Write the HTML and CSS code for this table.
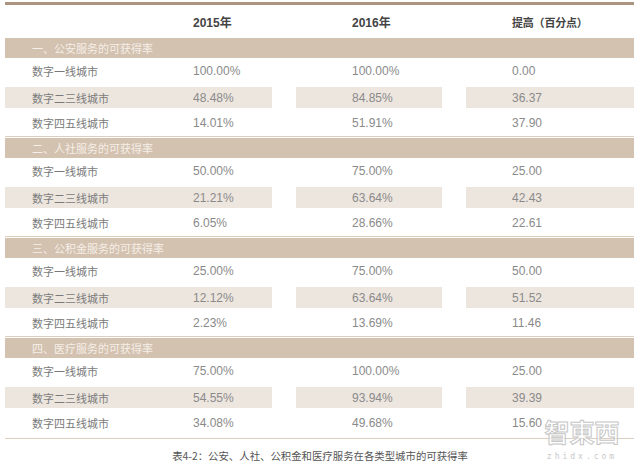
FILE: index.html
```html
<!DOCTYPE html>
<html lang="zh">
<head>
<meta charset="utf-8">
<link rel="stylesheet" href="styles.css">
</head>
<body>
<div class="page">
  <div class="table">
    <div class="head">
      <div class="ca"><span class="lbl"></span><span class="v1">2015年</span></div>
      <div class="cb">2016年</div>
      <div class="cc">提高（百分点）</div>
    </div>

    <div class="section">
      <div class="band">一、公安服务的可获得率</div>
      <div class="row"><div class="ca"><span class="lbl">数字一线城市</span><span class="v1">100.00%</span></div><div class="cb">100.00%</div><div class="cc">0.00</div></div>
      <div class="row alt"><div class="ca"><span class="lbl">数字二三线城市</span><span class="v1">48.48%</span></div><div class="cb">84.85%</div><div class="cc">36.37</div></div>
      <div class="row"><div class="ca"><span class="lbl">数字四五线城市</span><span class="v1">14.01%</span></div><div class="cb">51.91%</div><div class="cc">37.90</div></div>
    </div>

    <div class="section">
      <div class="band">二、人社服务的可获得率</div>
      <div class="row"><div class="ca"><span class="lbl">数字一线城市</span><span class="v1">50.00%</span></div><div class="cb">75.00%</div><div class="cc">25.00</div></div>
      <div class="row alt"><div class="ca"><span class="lbl">数字二三线城市</span><span class="v1">21.21%</span></div><div class="cb">63.64%</div><div class="cc">42.43</div></div>
      <div class="row"><div class="ca"><span class="lbl">数字四五线城市</span><span class="v1">6.05%</span></div><div class="cb">28.66%</div><div class="cc">22.61</div></div>
    </div>

    <div class="section">
      <div class="band">三、公积金服务的可获得率</div>
      <div class="row"><div class="ca"><span class="lbl">数字一线城市</span><span class="v1">25.00%</span></div><div class="cb">75.00%</div><div class="cc">50.00</div></div>
      <div class="row alt"><div class="ca"><span class="lbl">数字二三线城市</span><span class="v1">12.12%</span></div><div class="cb">63.64%</div><div class="cc">51.52</div></div>
      <div class="row"><div class="ca"><span class="lbl">数字四五线城市</span><span class="v1">2.23%</span></div><div class="cb">13.69%</div><div class="cc">11.46</div></div>
    </div>

    <div class="section last">
      <div class="band">四、医疗服务的可获得率</div>
      <div class="row"><div class="ca"><span class="lbl">数字一线城市</span><span class="v1">75.00%</span></div><div class="cb">100.00%</div><div class="cc">25.00</div></div>
      <div class="row alt"><div class="ca"><span class="lbl">数字二三线城市</span><span class="v1">54.55%</span></div><div class="cb">93.94%</div><div class="cc">39.39</div></div>
      <div class="row"><div class="ca"><span class="lbl">数字四五线城市</span><span class="v1">34.08%</span></div><div class="cb">49.68%</div><div class="cc">15.60</div></div>
    </div>
  </div>
  <div class="caption">表4-2：公安、人社、公积金和医疗服务在各类型城市的可获得率</div>
  <div class="watermark">
    <div class="wm-logo">智東西</div>
    <div class="wm-url">zhidx.com</div>
  </div>
</div>
</body>
</html>
```

FILE: styles.css
```css
* { box-sizing: border-box; }
html, body { margin: 0; padding: 0; background: #ffffff; }
body {
  font-family: "Liberation Sans", "Noto Sans CJK SC", sans-serif;
  width: 640px;
  height: 476px;
  overflow: hidden;
}
.page {
  position: relative;
  width: 640px;
  height: 476px;
  padding-top: 2px;
}
.table {
  margin-left: 5px;
  width: 629px;
  border-top: 3px solid #ab9580;
}
.head, .row {
  display: grid;
  grid-template-columns: 267px 146px 168px;
  column-gap: 24px;
}
.head {
  height: 33px;
  align-items: center;
  font-weight: bold;
  font-size: 12px;
  color: #444444;
}
.head .cc { font-size: 11px; letter-spacing: -0.2px; }
.ca {
  display: flex;
  align-items: center;
  height: 100%;
}
.lbl {
  width: 188px;
  padding-left: 27px;
  font-family: "Noto Sans CJK SC", sans-serif;
  font-size: 11px;
  color: #7a7a7a;
}
.head .ca, .head .cb, .head .cc { height: auto; }
.cb { padding-left: 56px; display: flex; align-items: center; }
.cc { padding-left: 46px; display: flex; align-items: center; }
.section {
  border-bottom: 1px solid #dccfc2;
  margin-bottom: 1px;
}
.section.last { padding-bottom: 2px; }
.band {
  height: 20px;
  background: #d3c2b0;
  color: #f6efe8;
  font-family: "Noto Sans CJK SC", sans-serif;
  font-size: 11px;
  line-height: 20px;
  padding-left: 27px;
}
.row {
  height: 26px;
  font-size: 12px;
  color: #8a8a8a;
}
.row.alt {
  padding: 3px 0 2px;
}
.row.alt .ca, .row.alt .cb, .row.alt .cc {
  background: #ede6df;
}
.caption {
  margin-top: 9px;
  text-align: center;
  font-family: "Noto Sans CJK SC", sans-serif;
  font-size: 10.4px;
  color: #555555;
}
.watermark {
  position: absolute;
  left: 536px;
  top: 417px;
  width: 92px;
  text-align: center;
}
.wm-logo {
  font-family: "Noto Sans CJK TC", sans-serif;
  font-size: 25px;
  font-weight: bold;
  line-height: 28px;
  height: 28px;
  color: rgba(255,255,255,0.55);
  -webkit-text-stroke: 1px #c6c6c6;
  letter-spacing: 0;
}
.wm-url {
  margin-top: 7px;
  font-family: "DejaVu Sans Mono", monospace;
  font-size: 8px;
  letter-spacing: 3px;
  color: #c8c8c8;
  line-height: 9px;
}
```
